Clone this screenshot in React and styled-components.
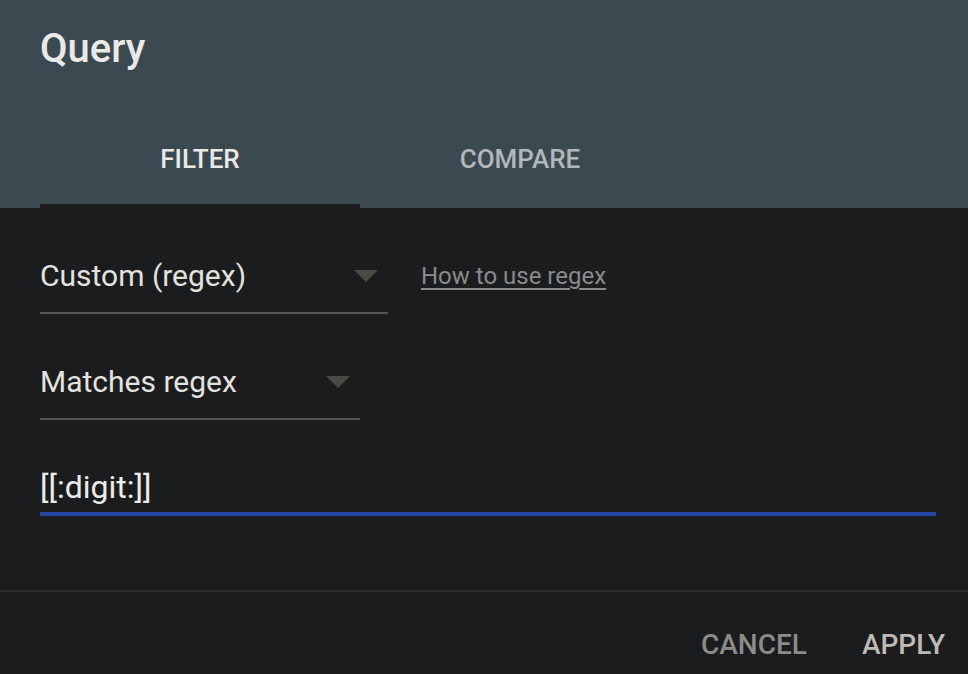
import React, { useState } from "react";
import styled, { createGlobalStyle } from "styled-components";

const GlobalStyle = createGlobalStyle`
  html, body {
    margin: 0;
    padding: 0;
    background: #1b1c1e;
  }
  * {
    box-sizing: border-box;
  }
`;

function SelectField({ value, width }) {
  return (
    <Select width={width}>
      <SelectText>{value}</SelectText>
      <Arrow viewBox="0 0 24 12">
        <path d="M0 0 L24 0 L12 12 Z" fill="#4b4942" />
      </Arrow>
    </Select>
  );
}

function App() {
  const [tab, setTab] = useState("filter");
  const [regex, setRegex] = useState("[[:digit:]]");

  return (
    <Dialog>
      <GlobalStyle />
      <Header>
        <Title>Query</Title>
        <Tabs>
          <Tab active={tab === "filter"} onClick={() => setTab("filter")}>
            FILTER
          </Tab>
          <Tab active={tab === "compare"} onClick={() => setTab("compare")}>
            COMPARE
          </Tab>
        </Tabs>
      </Header>
      <Body>
        <Row>
          <SelectField value="Custom (regex)" width={348} />
          <HelpLink href="#">How to use regex</HelpLink>
        </Row>
        <Row>
          <SelectField value="Matches regex" width={320} />
        </Row>
        <InputWrap>
          <TextInput
            value={regex}
            onChange={(e) => setRegex(e.target.value)}
          />
        </InputWrap>
      </Body>
      <Footer>
        <FooterBtn>CANCEL</FooterBtn>
        <FooterBtn primary>APPLY</FooterBtn>
      </Footer>
    </Dialog>
  );
}

export default App;

const Dialog = styled.div`
  width: 968px;
  height: 674px;
  display: flex;
  flex-direction: column;
  background: #1b1c1e;
  font-family: Roboto, "Liberation Sans", sans-serif;
  overflow: hidden;
`;

const Header = styled.div`
  background: #3b4951;
  padding: 25px 0 0 40px;
  height: 208px;
  display: flex;
  flex-direction: column;
`;

const Title = styled.h1`
  margin: 0;
  font-size: 40px;
  line-height: 48px;
  font-weight: 500;
  color: #ebe9e6;
`;

const Tabs = styled.div`
  display: flex;
  margin-top: auto;
`;

const Tab = styled.button`
  width: 320px;
  height: 96px;
  border: none;
  background: transparent;
  border-bottom: 4px solid ${(p) => (p.active ? "#1b1c1e" : "transparent")};
  padding: 2px 0 0;
  font-family: inherit;
  font-size: 26px;
  font-weight: 500;
  color: ${(p) => (p.active ? "#ebe9e6" : "#b2b7b9")};
  cursor: pointer;
`;

const Body = styled.div`
  flex: 1;
  padding: 32px 32px 0 40px;
  display: flex;
  flex-direction: column;
`;

const Row = styled.div`
  display: flex;
  align-items: center;
  gap: 33px;
  margin-bottom: 32px;
`;

const Select = styled.div`
  width: ${(p) => p.width}px;
  height: 74px;
  display: flex;
  align-items: center;
  justify-content: space-between;
  padding: 0 10px 2px 0;
  border-bottom: 2px solid #5a554e;
`;

const SelectText = styled.span`
  font-size: 30px;
  color: #e4e2de;
`;

const Arrow = styled.svg`
  width: 24px;
  height: 12px;
  margin-top: 2px;
`;

const HelpLink = styled.a`
  font-size: 24px;
  color: #8a8a8a;
  text-decoration: underline;
  text-underline-offset: 4px;
  text-decoration-thickness: 2px;
  margin-bottom: 2px;
`;

const InputWrap = styled.div`
  margin-top: -12px;
  width: 896px;
  border-bottom: 4px solid #2546a0;
`;

const TextInput = styled.input`
  width: 100%;
  height: 72px;
  border: none;
  outline: none;
  background: transparent;
  padding: 22px 0 0;
  font-family: inherit;
  font-size: 32px;
  color: #ecebe8;
`;

const Footer = styled.div`
  height: 84px;
  border-top: 2px solid #2a2b2d;
  display: flex;
  align-items: center;
  justify-content: flex-end;
  gap: 55px;
  padding: 22px 23px 0 0;
`;

const FooterBtn = styled.button`
  border: none;
  background: transparent;
  padding: 0;
  font-family: inherit;
  font-size: 28px;
  font-weight: 500;
  color: ${(p) => (p.primary ? "#bfbab2" : "#8c8b89")};
  cursor: pointer;
`;
